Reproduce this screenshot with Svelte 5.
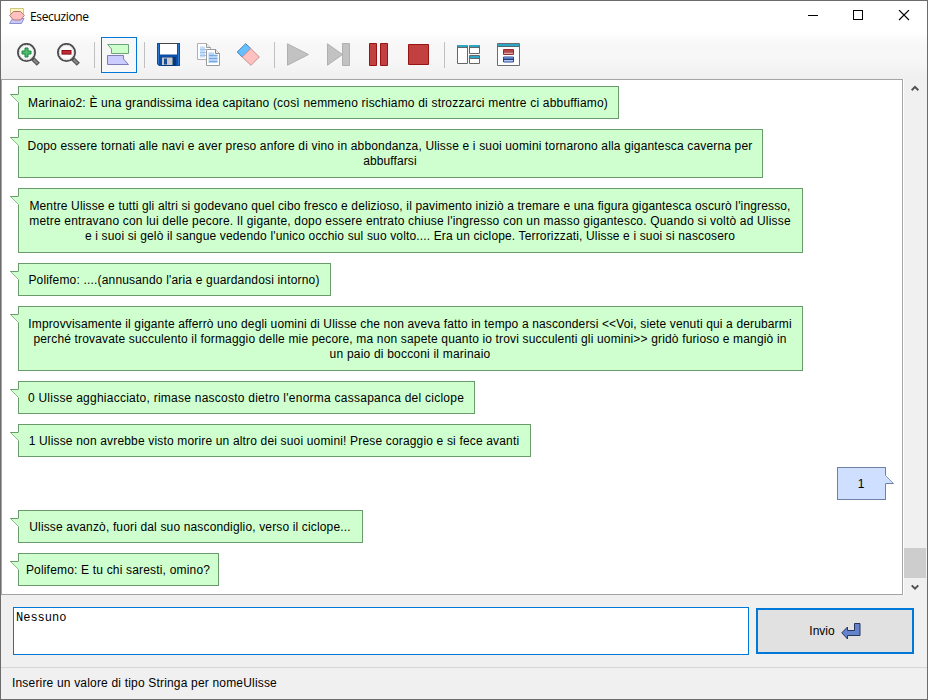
<script>
  // Each line is [text, letter spacing in px].
  const messages = [
    { width: 601, lines: [['Marinaio2: È una grandissima idea capitano (così nemmeno rischiamo di strozzarci mentre ci abbuffiamo)', 0.19]] },
    { width: 745, lines: [
      ['Dopo essere tornati alle navi e aver preso anfore di vino in abbondanza, Ulisse e i suoi uomini tornarono alla gigantesca caverna per', 0.158],
      ['abbuffarsi', 0.1]
    ] },
    { width: 785, lines: [
      ["Mentre Ulisse e tutti gli altri si godevano quel cibo fresco e delizioso, il pavimento iniziò a tremare e una figura gigantesca oscurò l'ingresso,", 0.145],
      ["metre entravano con lui delle pecore. Il gigante, dopo essere entrato chiuse l'ingresso con un masso gigantesco. Quando si voltò ad Ulisse", 0.18],
      ["e i suoi si gelò il sangue vedendo l'unico occhio sul suo volto.... Era un ciclope. Terrorizzati, Ulisse e i suoi si nascosero", 0.15]
    ] },
    { width: 313, lines: [["Polifemo: ....(annusando l'aria e guardandosi intorno)", 0.175]] },
    { width: 785, lines: [
      ['Improvvisamente il gigante afferrò uno degli uomini di Ulisse che non aveva fatto in tempo a nascondersi <<Voi, siete venuti qui a derubarmi', 0.142],
      ['perché trovavate succulento il formaggio delle mie pecore, ma non sapete quanto io trovi succulenti gli uomini>> gridò furioso e mangiò in', 0.16],
      ['un paio di bocconi il marinaio', 0.2]
    ] },
    { width: 457, lines: [["0 Ulisse agghiacciato, rimase nascosto dietro l'enorma cassapanca del ciclope", 0.247]] },
    { width: 513, lines: [['1 Ulisse non avrebbe visto morire un altro dei suoi uomini! Prese coraggio e si fece avanti', 0.165]] },
    { width: 49, mine: true, lines: [['1', 0]] },
    { width: 345, lines: [['Ulisse avanzò, fuori dal suo nascondiglio, verso il ciclope...', 0.15]] },
    { width: 201, lines: [['Polifemo: E tu chi saresti, omino?', 0.18]] }
  ];
  const heights = { 1: 33, 2: 49, 3: 65 };
  let answer = $state('Nessuno');
</script>

{#snippet lens(plus)}
  <svg class="icon" viewBox="0 0 24 24">
    <path d="M16.5 15.5l5.8 5.8" stroke="#555" stroke-width="4.4" />
    <path d="M17.5 16.5l4 4" stroke="#888" stroke-width="2.2" />
    <circle cx="10.5" cy="9.5" r="8.6" fill="#fbfbfb" stroke="#4c4c4c" stroke-width="1.9" />
    <circle cx="10.5" cy="9.5" r="7.2" fill="none" stroke="#d8d8d8" />
    {#if plus}
      <path d="M9 5h3v3h3v3h-3v3H9v-3H6V8h3z" fill="#4fba70" stroke="#168a3c" />
    {:else}
      <rect x="6" y="7.5" width="9" height="3.6" fill="#c02c34" stroke="#8e1119" />
    {/if}
  </svg>
{/snippet}

<div class="window">
  <header>
    <svg class="logo" width="16" height="16" viewBox="0 0 16 16">
      <path d="M1.5.5h13v5h-13z" fill="#fff6bb" stroke="#cfc584" />
      <path d="M3.500 10.500h11.500l-2.500 5H.500z" fill="#c7c8fa" stroke="#8f91cc" />
      <path d="M4.500 3.500h7l3.800 4-3.800 4.500h-7L.700 7.500z" fill="#ffc0c0" stroke="#b57474" />
    </svg>
    <span class="title">Esecuzione</span>
    <svg class="controls" width="102" height="11" viewBox="0 0 102 11" fill="none" stroke="#000" shape-rendering="crispEdges">
      <path d="M0 5.500h10" />
      <rect x="45.500" y=".500" width="9" height="9" />
      <path d="M91 0l10 10M101 0L91 10" shape-rendering="auto" stroke-width="1.100" />
    </svg>
  </header>

  <nav>
    <button>{@render lens(true)}</button>
    <button>{@render lens(false)}</button>
    <i></i>
    <button class="active">
      <svg class="icon" viewBox="0 0 24 24">
        <path d="M.7 1.5h20.8v9h-17V6z" fill="#ccffcc" stroke="#6ea27a" />
        <path d="M.5 12.5h16V16l5 5.5H.5z" fill="#ccccff" stroke="#7d7eb6" />
      </svg>
    </button>
    <i></i>
    <button>
      <svg class="icon" viewBox="0 0 24 24">
        <path d="M1 0h23v23H3l-2-2z" fill="#0a4ea8" />
        <path d="M2 1h1v20H2zM22 1h1v21h-1z" fill="#2a76d0" />
        <path d="M4 0h17v11.5H4z" fill="#fff" />
        <path d="M4 0h17v1H4z" fill="#444" />
        <rect x="6" y="14" width="14" height="9" fill="#08387c" />
        <rect x="6" y="14.5" width="10.5" height="7.5" fill="#c9c9c9" />
        <rect x="8" y="15.5" width="3" height="6" fill="#1e4f96" />
      </svg>
    </button>
    <button>
      <svg class="icon" viewBox="0 0 24 24">
        <path d="M1.5.5h9l4 4v12h-13z" fill="#fff" stroke="#b0b0b0" />
        <path d="M10.5.5v4h4" fill="#eee" stroke="#999" />
        <path d="M4 3.5h5v11H4z" fill="#c4dcf8" /><path d="M4 6.5h6M4 9.5h6M4 12.5h6" stroke="#9fc4ee" />
        <path d="M10.5 6.5h9l4 4v12h-13z" fill="#fff" stroke="#999" />
        <path d="M19.5 6.5v4h4" fill="#eee" stroke="#888" />
        <path d="M12.5 9.5h5.5v2h3.5v8.5h-9z" fill="#b4d3f8" /><path d="M13 12.5h8.5M13 15.5h8.5M13 18.5h8.5" stroke="#7ba8dc" />
      </svg>
    </button>
    <button>
      <svg class="icon" viewBox="0 0 24 24">
        <path d="M9.7.7L14.8 5.5 6.2 14 1.2 9z" fill="#66bfff" stroke="#3d83bb" />
        <path d="M14.8 5.5L23.3 14 15 22.3 6.2 14z" fill="#ffc0c0" stroke="#c58f8f" />
      </svg>
    </button>
    <i></i>
    <button>
      <svg class="icon" viewBox="0 0 24 24"><path d="M1.5.8L22.5 11.5 1.5 22.2z" fill="#c2c2c2" stroke="#b0b0b0" /></svg>
    </button>
    <button>
      <svg class="icon" viewBox="0 0 24 24" fill="#c2c2c2" stroke="#b0b0b0">
        <path d="M1.5.8L16.5 11.5 1.5 22.2z" /><path d="M16.5.5h7v22h-7z" />
      </svg>
    </button>
    <button>
      <svg class="icon" viewBox="0 0 24 24" fill="#c24040" stroke="#971414"><path d="M3.5.5h7v22h-7zM14.5.5h7v22h-7z" /></svg>
    </button>
    <button>
      <svg class="icon" viewBox="0 0 24 24" fill="#c24040" stroke="#971414"><path d="M2.5 1.5h20v20h-20z" /></svg>
    </button>
    <i></i>
    <button>
      <svg class="icon" viewBox="0 0 24 24">
        <path d="M1.5 2.5h10v18h-10zM13.5 2.5h10v8h-10zM13.5 12.5h10v8h-10z" fill="#fff" stroke="#666" />
        <path d="M2 2h9v2H2zM14 2h9v2h-9zM14 13h9v2h-9z" fill="#30a6c6" />
        <path d="M1.5 4.500h10M13.500 4.500h10M13.500 15.500h10" stroke="#666" />
      </svg>
    </button>
    <button>
      <svg class="icon" viewBox="0 0 24 24">
        <path d="M1.5.5h22v22h-22z" fill="#fff" stroke="#6c6c6c" />
        <path d="M2 1h21v2.5H2z" fill="#30a6c6" /><path d="M1.5 3.5h22" stroke="#496c77" />
        <path d="M7.5 6.500h10v5h-10z" fill="#dfa8a8" stroke="#963030" /><path d="M8 7h9v1.500H8z" fill="#c24040" /><path d="M7 9h11" stroke="#851f1f" />
        <path d="M7.5 14h10v5h-10z" fill="#b8c8ee" stroke="#2c4c90" /><path d="M8 14.500h9V16H8z" fill="#4f78c8" /><path d="M7 16.500h11" stroke="#1e3a78" />
      </svg>
    </button>
  </nav>

  <section>
    <div class="chat">
      {#each messages as m}
        <div class="bubble" class:mine={m.mine} style:width="{m.width}px" style:height="{heights[m.lines.length]}px">
          {#each m.lines as [text, spacing]}
            <p style:letter-spacing="{spacing}px">{text}</p>
          {/each}
          {#if m.mine}
            <svg class="tail" width="9" height="10" viewBox="0 0 9 10">
              <path d="M0 0L8.5 8.5H0z" fill="#cfdfff" /><path d="M.5.5l8 8" stroke="#8a98bd" /><path d="M1 8.5h7.5" stroke="#6f7fa6" />
            </svg>
          {:else}
            <svg class="tail" width="9" height="10" viewBox="0 0 9 10">
              <path d="M.5.5H9V9z" fill="#cfffcf" /><path d="M0 .5h8" stroke="#6a9b6a" /><path d="M.5.5l8 8" stroke="#8fbb8f" />
            </svg>
          {/if}
        </div>
      {/each}
    </div>
    <aside>
      <svg width="8" height="7" viewBox="0 0 8 7" fill="none" stroke="#505050" stroke-width="2"><path d="M.7 5.2L4 1.9l3.3 3.3" /></svg>
      <div class="thumb"></div>
      <svg width="8" height="7" viewBox="0 0 8 7" fill="none" stroke="#505050" stroke-width="2"><path d="M.7 1.4L4 4.7l3.300-3.300" /></svg>
    </aside>
  </section>

  <form>
    <textarea bind:value={answer} spellcheck="false"></textarea>
    <button type="button" class="send">
      <span>Invio</span>
      <svg width="20" height="18" viewBox="0 0 20 18">
        <path d="M13.5 1.5h5.500v12H6.500v3.500L.8 10.800 6.500 5v3.500h7z" fill="#6384cc" stroke="#27375c" />
      </svg>
    </button>
  </form>

  <footer>Inserire un valore di tipo Stringa per nomeUlisse</footer>
</div>

<style>
  :global(body) { margin: 0; }
  .window {
    box-sizing: border-box; width: 928px; height: 700px; border: 1px solid #6c6c6c;
    display: flex; flex-direction: column; background: #f0f0f0; color: #000;
    font: 12px/15px "Liberation Sans", Arial, sans-serif; overflow: hidden;
  }
  header { height: 30px; flex: none; display: flex; align-items: center; background: #fff; box-sizing: border-box; padding: 0 17px 1px 8px; }
  .title { margin-left: 5px; flex: 1; font: 12px/15px "Open Sans", "Segoe UI", sans-serif; letter-spacing: -0.35px; padding-top: 1px; }
  nav { height: 48px; flex: none; box-sizing: border-box; padding: 6px 9px; display: flex; gap: 4px; background: linear-gradient(#fff, #f7f7f7 30%, #f6f6f6 65%, #efefef); }
  nav button { box-sizing: border-box; width: 36px; height: 36px; padding: 0; border: 1px solid transparent; background: none; display: flex; align-items: center; justify-content: center; }
  nav button.active { border-color: #0078d7; background: #f7f7f7; }
  nav i { width: 1px; height: 26px; margin: 5px 1px 0 4px; background: #c0c0c0; }
  nav i:nth-of-type(1) { margin-right: 2px; }
  nav i:nth-of-type(2) { margin-left: 3px; }
  .icon { width: 24px; height: 24px; display: block; }
  svg { flex: none; }
  section { height: 516px; flex: none; display: flex; }
  .chat { box-sizing: border-box; width: 902px; flex: none; border: 1px solid #a4a4a4; background: #fff; padding: 6px 16px; display: flex; flex-direction: column; align-items: flex-start; gap: 10px; }
  .bubble { box-sizing: border-box; flex: none; position: relative; padding: 1px 1px 0 0; border: 1px solid #6a9b6a; background: #cfffcf; display: flex; flex-direction: column; align-items: center; justify-content: center; }
  .bubble.mine { align-self: flex-end; background: #cfdfff; border-color: #6f7fa6; }
  p { margin: 0; white-space: nowrap; }
  .tail { position: absolute; left: -9px; top: 7px; overflow: visible; }
  .mine .tail { left: auto; right: -9px; top: 7px; }
  aside { box-sizing: border-box; width: 24px; padding: 6px 2px 4px 0; border-left: 1px solid #fff; display: flex; flex-direction: column; align-items: center; }
  .thumb { width: 22px; height: 30px; background: #cdcdcd; margin: auto 0 6px; }
  form { height: 72px; flex: none; box-sizing: border-box; padding: 12px 13px 0 12px; display: flex; gap: 7px; }
  textarea { box-sizing: border-box; width: 736px; height: 48px; margin: 0; padding: 3px 2px; border: 1px solid #0078d7; border-radius: 0; outline: 0; resize: none; background: #fff; color: #000; font: 12px/15px "Liberation Mono", "Courier New", monospace; }
  .send { box-sizing: border-box; width: 158px; height: 46px; margin-top: 1px; padding: 0 0 1px; border: 2px solid #0078d7; background: #e1e1e1; color: #000; font: inherit; display: flex; align-items: center; justify-content: center; gap: 6px; }
  .send span { padding-top: 2px; }
  footer { flex: 1; box-sizing: border-box; border-top: 1px solid #d7d7d7; padding: 8px 11px; letter-spacing: 0.18px; }
</style>
